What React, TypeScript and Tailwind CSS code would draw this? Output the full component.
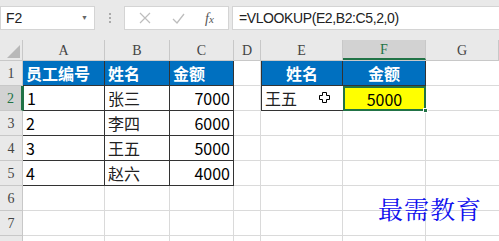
import React from "react";

const cols = [
  { key: "A", w: "w-[82px]" },
  { key: "B", w: "w-[65px]" },
  { key: "C", w: "w-[64px]" },
  { key: "D", w: "w-[27px]" },
  { key: "E", w: "w-[82px]" },
  { key: "F", w: "w-[83px]" },
  { key: "G", w: "flex-1" },
];

const rows = [
  ["员工编号", "姓名", "金额"],
  ["1", "张三", "7000"],
  ["2", "李四", "6000"],
  ["3", "王五", "5000"],
  ["4", "赵六", "4000"],
];

const cjk = "font-['Microsoft_YaHei','Noto_Sans_CJK_SC',sans-serif]";
const serif = "font-['SimSun','Liberation_Serif',serif]";

function RowHeader({ n, active }: { n?: number; active?: boolean }) {
  return (
    <div
      className={`w-[23px] shrink-0 h-full flex items-center justify-center border-r border-b border-[#c8c8c8] text-[14px] ${serif} ${
        active ? "bg-[#d2d2d2] text-[#217346] border-r-[#217346] border-r-2" : "bg-[#e9e9e9] text-[#444]"
      }`}
    >
      {n}
    </div>
  );
}

export default function App() {
  return (
    <div className="w-[499px] h-[241px] overflow-hidden bg-white relative select-none">
      {/* Formula bar */}
      <div className="h-[40px] bg-[#e9e9e9] flex items-center pt-[2px] pb-[6px]">
        <div className="w-[95px] h-[24px] bg-white border border-[#d4d4d4] flex items-center justify-between pl-[5px] pr-[6px] font-['Liberation_Sans',sans-serif] text-[14px] text-[#222]">
          <span>F2</span>
          <span className="text-[7px] text-[#666]">▼</span>
        </div>
        <div className="w-[29px] flex flex-col items-center gap-[2px]">
          <span className="w-[2px] h-[2px] bg-[#aaa]" />
          <span className="w-[2px] h-[2px] bg-[#aaa]" />
          <span className="w-[2px] h-[2px] bg-[#aaa]" />
        </div>
        <div className="w-[105px] h-[24px] bg-white border border-[#d4d4d4] flex items-center justify-around px-[4px]">
          <svg width="12" height="12" viewBox="0 0 12 12">
            <path d="M1 1 L11 11 M11 1 L1 11" stroke="#bdbdbd" strokeWidth="1.2" />
          </svg>
          <svg width="13" height="11" viewBox="0 0 13 11">
            <path d="M1 6 L5 10 L12 1" stroke="#bdbdbd" strokeWidth="1.3" fill="none" />
          </svg>
          <span className={`italic text-[14px] text-[#555] ${serif}`}>
            f<span className="text-[11px]">x</span>
          </span>
        </div>
        <div className="ml-[3px] flex-1 h-[24px] bg-white border border-[#d4d4d4] border-r-0 flex items-center pl-[6px] font-['Liberation_Sans',sans-serif] text-[14px] text-[#222] tracking-[-0.4px]">
          =VLOOKUP(E2,B2:C5,2,0)
        </div>
      </div>

      {/* Column headers */}
      <div className="h-[21px] flex bg-[#e9e9e9] border-b border-[#c8c8c8]">
        <div className="w-[23px] shrink-0 border-r border-[#c8c8c8] relative">
          <div className="absolute right-[2px] bottom-[2px] w-0 h-0 border-l-[13px] border-l-transparent border-b-[13px] border-b-[#b8b8b8]" />
        </div>
        {cols.map((c) => (
          <div
            key={c.key}
            className={`${c.w} shrink-0 flex items-center justify-center border-r border-[#c8c8c8] text-[14px] ${serif} ${
              c.key === "F" ? "bg-[#d2d2d2] text-[#217346] border-b-2 border-b-[#217346]" : "text-[#444]"
            }`}
          >
            {c.key}
          </div>
        ))}
      </div>

      {/* Grid rows */}
      {[1, 2, 3, 4, 5, 6, 7, 8].map((n) => {
        const data = rows[n - 1];
        const head = n === 1;
        return (
          <div key={n} className="h-[25px] flex">
            <RowHeader n={n < 8 ? n : undefined} active={n === 2} />
            {/* A-C table */}
            {data ? (
              <>
                <div
                  className={`w-[82px] shrink-0 flex items-center pl-[3px] text-[16px] ${cjk} border-b border-r border-[#333] ${
                    head ? "bg-[#0070c0] text-white font-bold" : "text-black"
                  } ${n === 2 ? "border-l border-l-[#217346]" : ""}`}
                >
                  {data[0]}
                </div>
                <div
                  className={`w-[65px] shrink-0 flex items-center pl-[3px] text-[16px] ${cjk} border-b border-r border-[#333] ${
                    head ? "bg-[#0070c0] text-white font-bold" : "text-[#222]"
                  }`}
                >
                  {data[1]}
                </div>
                <div
                  className={`w-[64px] shrink-0 flex items-center text-[16px] ${cjk} border-b border-r border-[#333] ${
                    head ? "bg-[#0070c0] text-white font-bold pl-[3px]" : "text-black justify-end pr-[3px]"
                  }`}
                >
                  {data[2]}
                </div>
              </>
            ) : (
              <>
                <div className="w-[82px] shrink-0 border-b border-r border-[#dadada]" />
                <div className="w-[65px] shrink-0 border-b border-r border-[#dadada]" />
                <div className="w-[64px] shrink-0 border-b border-r border-[#dadada]" />
              </>
            )}
            <div className="w-[27px] shrink-0 border-b border-r border-[#dadada]" />
            {n === 1 ? (
              <>
                <div className={`w-[82px] shrink-0 flex items-center justify-center bg-[#0070c0] text-white font-bold text-[16px] ${cjk} border border-t-0 border-[#333]`}>
                  姓名
                </div>
                <div className={`w-[83px] shrink-0 flex items-center justify-center bg-[#0070c0] text-white font-bold text-[16px] ${cjk} border-b border-r border-[#333]`}>
                  金额
                </div>
              </>
            ) : n === 2 ? (
              <>
                <div className={`w-[82px] shrink-0 flex items-center pl-[3px] text-[16px] text-[#222] ${cjk} border-l border-b border-[#333] relative`}>
                  王五
                  <svg className="absolute left-[57px] top-[6px]" width="11" height="11" viewBox="0 0 11 11">
                    <path
                      d="M3.5 0.5 H7.5 V3.5 H10.5 V7.5 H7.5 V10.5 H3.5 V7.5 H0.5 V3.5 H3.5 Z"
                      fill="white"
                      stroke="black"
                      strokeWidth="1"
                    />
                  </svg>
                </div>
                <div className={`w-[83px] shrink-0 flex items-center justify-center bg-[#ffff00] text-[16px] text-black ${cjk} border-2 border-[#217346] relative`}>
                  5000
                  <div className="absolute -right-[4px] -bottom-[4px] w-[5px] h-[5px] bg-[#217346] border border-white" />
                </div>
              </>
            ) : (
              <>
                <div className="w-[82px] shrink-0 border-b border-r border-[#dadada]" />
                <div className="w-[83px] shrink-0 border-b border-r border-[#dadada]" />
              </>
            )}
            <div className="flex-1 border-b border-[#dadada]" />
          </div>
        );
      })}

      {/* Watermark */}
      <div className="absolute left-[378px] top-[196px] text-[25px] leading-none text-[#1010ee] font-['STKaiti','KaiTi','Noto_Serif_CJK_SC','Noto_Sans_CJK_SC',serif] tracking-[1px]">
        最需教育
      </div>
    </div>
  );
}
